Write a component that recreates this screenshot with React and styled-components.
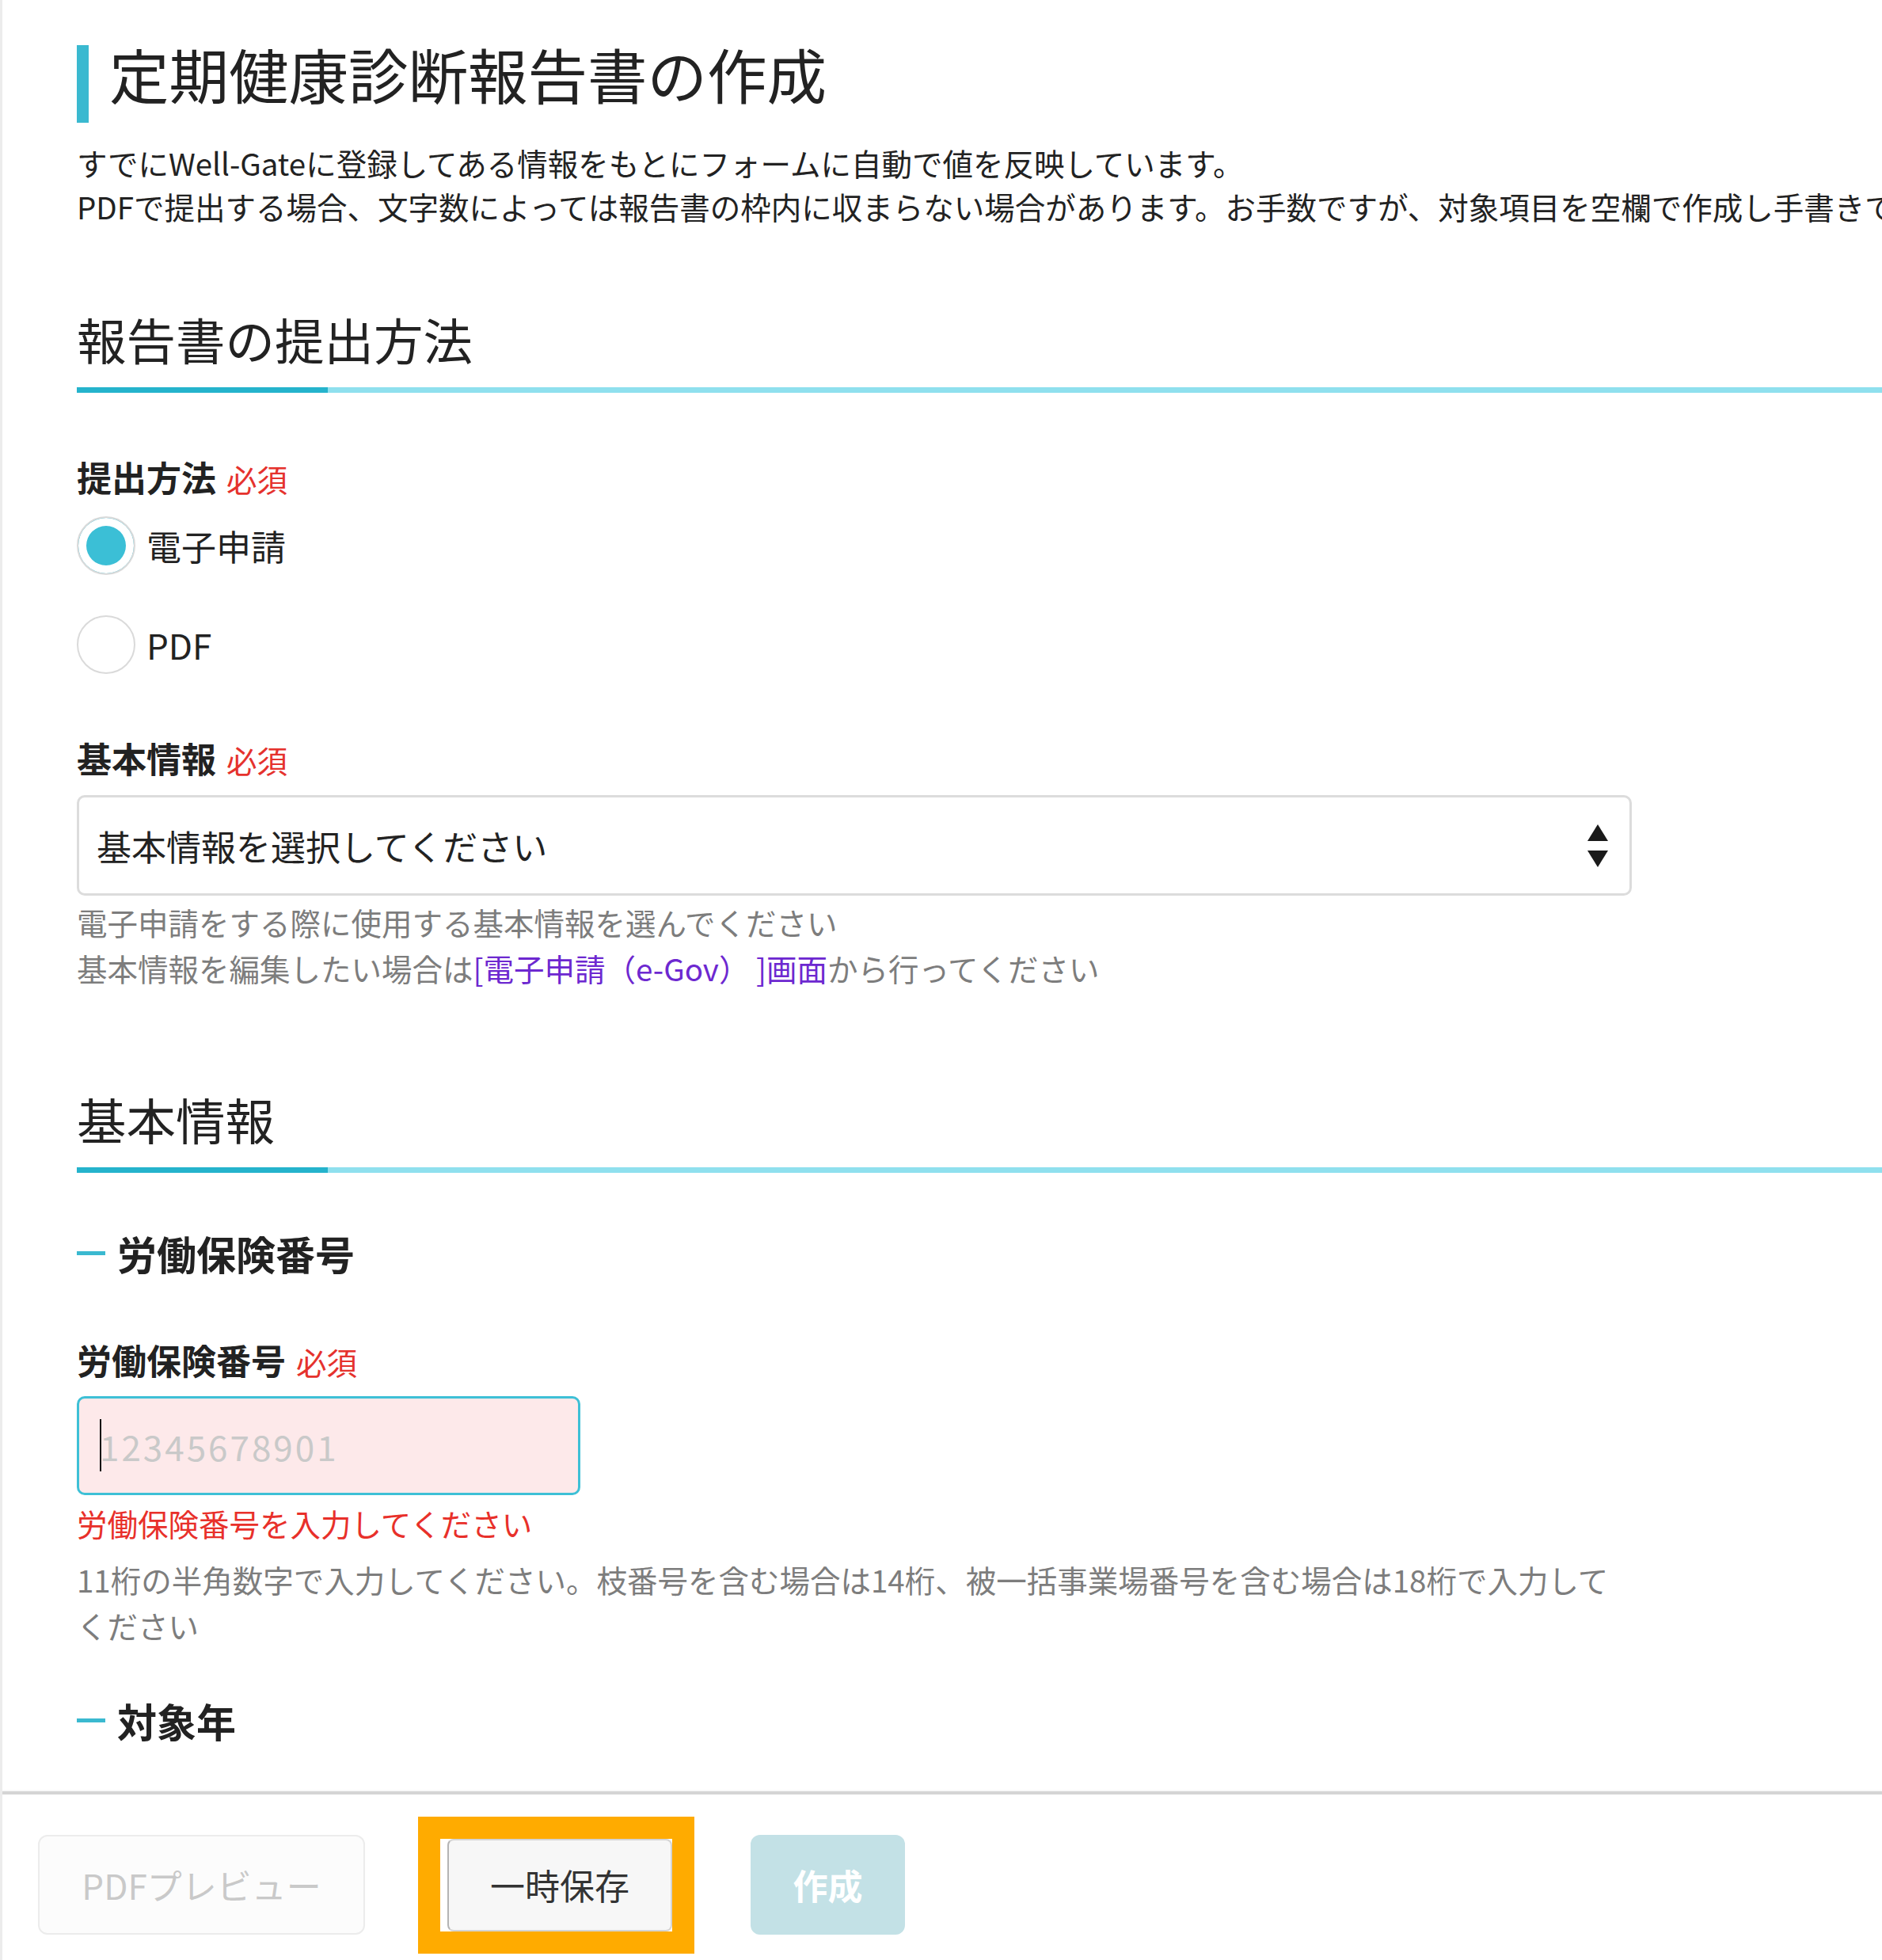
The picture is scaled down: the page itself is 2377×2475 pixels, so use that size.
import React from "react";
import styled, { createGlobalStyle } from "styled-components";

const FONT = `"Noto Sans CJK JP", "Noto Sans", "Liberation Sans", sans-serif`;

const GlobalStyle = createGlobalStyle`
  html, body {
    margin: 0;
    padding: 0;
    overflow: hidden;
    background: #fff;
  }
  body {
    font-family: ${FONT};
    color: #222;
  }
  *, *::before, *::after {
    box-sizing: border-box;
  }
`;

const Page = styled.div`
  height: 100vh;
  display: flex;
  flex-direction: column;
  border-left: 3px solid #ececec;
  overflow: hidden;
`;

const Main = styled.main`
  flex: 1;
  min-height: 0;
  overflow: hidden;
  padding: 57px 0 0 94px;
`;

const Title = styled.h1`
  margin: 0;
  padding: 0 0 28px 26px;
  border-left: 15px solid #3ab9d0;
  font-size: 75.5px;
  font-weight: 400;
  line-height: 70px;
  white-space: nowrap;
`;

const Lead = styled.p`
  margin: 23px 0 0;
  font-size: 38.5px;
  line-height: 55px;
  white-space: nowrap;
`;

const SectionHeading = styled.h2`
  margin: ${(p) => p.$gap}px 0 0;
  padding-bottom: 28px;
  font-size: 62.5px;
  font-weight: 400;
  line-height: 80px;
  background: linear-gradient(90deg, #25b3cc 317px, #8fe0ee 317px) left bottom / 100% 7px no-repeat;
`;

const SubHeading = styled.h3`
  margin: ${(p) => p.$gap}px 0 0;
  display: flex;
  align-items: center;
  font-size: 50px;
  font-weight: 700;
  line-height: 64px;

  &::before {
    content: "";
    width: 36px;
    height: 5px;
    margin-right: 15px;
    background: #3ab9d0;
  }
`;

const FieldLabel = styled.div`
  margin-top: ${(p) => p.$gap}px;
  font-size: 44px;
  font-weight: 700;
  line-height: 60px;
`;

const Required = styled.span`
  margin-left: 13px;
  font-size: 38.5px;
  font-weight: 400;
  color: #e5322d;
`;

const RadioList = styled.div`
  margin-top: 18px;
  display: flex;
  flex-direction: column;
  gap: 51px;
`;

const RadioRow = styled.label`
  display: flex;
  align-items: center;
  gap: 14px;
  height: 74px;
  font-size: 44px;
  line-height: 60px;
  cursor: pointer;
`;

const RadioInput = styled.input.attrs({ type: "radio" })`
  appearance: none;
  -webkit-appearance: none;
  margin: 0;
  width: 74px;
  height: 74px;
  flex-shrink: 0;
  border: 2px solid #dadada;
  border-radius: 50%;
  background: #fff;

  &:checked {
    background: #3bbfd6;
    box-shadow: inset 0 0 0 10px #fff;
  }
`;

const SelectWrap = styled.div`
  position: relative;
  margin-top: 15px;
  width: 1964px;
`;

const Select = styled.select`
  appearance: none;
  -webkit-appearance: none;
  display: block;
  width: 100%;
  height: 127px;
  padding: 0 80px 0 22px;
  border: 3px solid #dcdcdc;
  border-radius: 10px;
  background: #fff;
  font-family: ${FONT};
  font-size: 44px;
  color: #222;
`;

const SelectArrows = styled.svg`
  position: absolute;
  right: 30px;
  top: 50%;
  transform: translateY(-50%);
  pointer-events: none;
`;

const Help = styled.p`
  margin: ${(p) => p.$gap}px 0 0;
  max-width: 1964px;
  font-size: 38.5px;
  line-height: 58px;
  color: #7d7d7d;
`;

const HelpLink = styled.a`
  color: #6d28d0;
  text-decoration: none;
`;

const ErrorText = styled.p`
  margin: 8px 0 0;
  font-size: 38.5px;
  line-height: 55px;
  color: #e8302a;
`;

const InputWrap = styled.div`
  position: relative;
  margin-top: 14px;
  width: 636px;

  &::after {
    content: "";
    position: absolute;
    left: 29px;
    top: 29px;
    width: 2px;
    height: 66px;
    background: #111;
  }
`;

const TextInput = styled.input`
  display: block;
  width: 100%;
  height: 125px;
  padding: 0 20px 0 26px;
  border: 3px solid #3ec0d6;
  border-radius: 10px;
  background: #fde9ea;
  outline: none;
  font-family: ${FONT};
  font-size: 44px;
  letter-spacing: 3px;
  color: #222;

  &::placeholder {
    color: #c9c9c9;
  }
`;

const Footer = styled.footer`
  flex-shrink: 0;
  height: 213px;
  display: flex;
  align-items: center;
  padding: 51px 0 32px 45px;
  border-top: 4px solid #d4d4d4;
  box-shadow: 0 -1px 2px rgba(0, 0, 0, 0.06);
  background: #fff;
`;

const Button = styled.button`
  flex-shrink: 0;
  height: ${(p) => p.$h || 126}px;
  width: ${(p) => p.$w}px;
  margin: 0;
  padding: 0;
  border-radius: 12px;
  font-family: ${FONT};
  font-size: 44px;
  cursor: pointer;
`;

const GhostButton = styled(Button)`
  border: 2px solid #ececec;
  background: #fcfcfc;
  color: #c9c9c9;
  cursor: default;
`;

const SecondaryButton = styled(Button)`
  border: 2px solid #d4d4d4;
  border-left-color: #b4b4b4;
  border-radius: 8px;
  background: #f7f7f7;
  color: #333;
`;

const PrimaryButton = styled(Button)`
  margin-left: 71px;
  border: none;
  background: #c3e1e6;
  color: #fff;
  font-weight: 700;
  cursor: default;
`;

const Highlight = styled.div`
  flex-shrink: 0;
  display: flex;
  margin-left: 67px;
  padding-left: 9px;
  border: 28px solid #ffab00;
  background: #fff;
`;

export default function App() {
  return (
    <>
      <GlobalStyle />
      <Page>
        <Main>
          <Title>定期健康診断報告書の作成</Title>
          <Lead>
            すでにWell-Gateに登録してある情報をもとにフォームに自動で値を反映しています。
            <br />
            PDFで提出する場合、文字数によっては報告書の枠内に収まらない場合があります。お手数ですが、対象項目を空欄で作成し手書きでご記入ください。
          </Lead>

          <SectionHeading $gap={100}>報告書の提出方法</SectionHeading>

          <FieldLabel $gap={76}>
            提出方法<Required>必須</Required>
          </FieldLabel>
          <RadioList>
            <RadioRow>
              <RadioInput name="method" defaultChecked />
              電子申請
            </RadioRow>
            <RadioRow>
              <RadioInput name="method" />
              PDF
            </RadioRow>
          </RadioList>

          <FieldLabel $gap={76}>
            基本情報<Required>必須</Required>
          </FieldLabel>
          <SelectWrap>
            <Select defaultValue="">
              <option value="">基本情報を選択してください</option>
            </Select>
            <SelectArrows width="26" height="54" viewBox="0 0 26 54">
              <polygon points="13,0 26,21 0,21" fill="#1a1a1a" />
              <polygon points="0,33 26,33 13,54" fill="#1a1a1a" />
            </SelectArrows>
          </SelectWrap>
          <Help $gap={4}>
            電子申請をする際に使用する基本情報を選んでください
            <br />
            基本情報を編集したい場合は
            <HelpLink href="#egov">[電子申請（e-Gov） ]画面</HelpLink>
            から行ってください
          </Help>

          <SectionHeading $gap={122}>基本情報</SectionHeading>

          <SubHeading $gap={69}>労働保険番号</SubHeading>
          <FieldLabel $gap={73}>
            労働保険番号<Required>必須</Required>
          </FieldLabel>
          <InputWrap>
            <TextInput type="text" placeholder="12345678901" />
          </InputWrap>
          <ErrorText>労働保険番号を入力してください</ErrorText>
          <Help $gap={14}>
            11桁の半角数字で入力してください。枝番号を含む場合は14桁、被一括事業場番号を含む場合は18桁で入力してください
          </Help>

          <SubHeading $gap={59}>対象年</SubHeading>
        </Main>

        <Footer>
          <GhostButton $w={413}>PDFプレビュー</GhostButton>
          <Highlight>
            <SecondaryButton $w={284} $h={117}>
              一時保存
            </SecondaryButton>
          </Highlight>
          <PrimaryButton $w={195}>作成</PrimaryButton>
        </Footer>
      </Page>
    </>
  );
}
